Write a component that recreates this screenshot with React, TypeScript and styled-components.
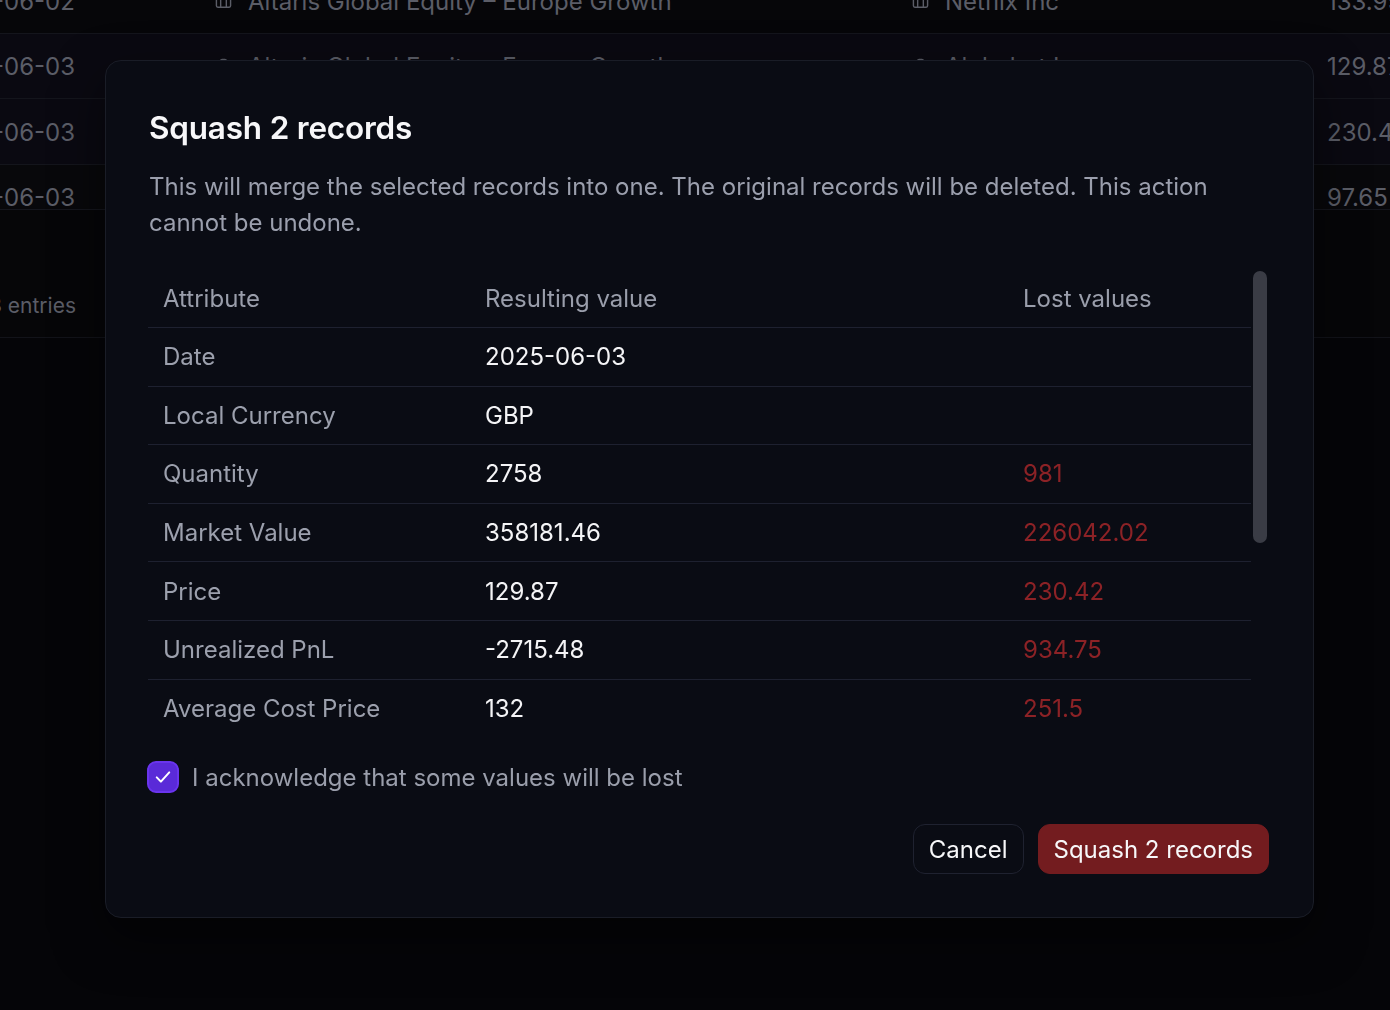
import React from 'react'
import styled, { createGlobalStyle } from 'styled-components'
import { Briefcase } from 'lucide-react'

const GlobalStyle = createGlobalStyle`
  * { box-sizing: border-box; }
  body {
    margin: 0;
    background: #050508;
    font-family: Inter, "Noto Sans", sans-serif;
    overflow: hidden;
  }
`

type Holding = { date: string; fund: string; company: string; price: string; selected?: boolean }

const holdings: Holding[] = [
    { date: '2025-06-02', fund: 'Altaris Global Equity – Europe Growth', company: 'Netflix Inc', price: '133.95' },
    { date: '2025-06-03', fund: 'Altaris Global Equity – Europe Growth', company: 'Alphabet Inc', price: '129.87', selected: true },
    { date: '2025-06-03', fund: 'Altaris Global Equity – Europe Growth', company: 'Alphabet Inc', price: '230.42', selected: true },
    { date: '2025-06-03', fund: 'Altaris Global Equity – Europe Growth', company: 'Alphabet Inc', price: '97.65' },
]

type Attr = { name: string; value: string; lost?: string }

const attributes: Attr[] = [
    { name: 'Date', value: '2025-06-03' },
    { name: 'Local Currency', value: 'GBP' },
    { name: 'Quantity', value: '2758', lost: '981' },
    { name: 'Market Value', value: '358181.46', lost: '226042.02' },
    { name: 'Price', value: '129.87', lost: '230.42' },
    { name: 'Unrealized PnL', value: '-2715.48', lost: '934.75' },
    { name: 'Average Cost Price', value: '132', lost: '251.5' },
    { name: 'Cost Value', value: '364052.00', lost: '246718.50' },
    { name: 'Company', value: 'Alphabet Inc' },
    { name: 'Fund', value: 'Altaris Global Equity – Europe Growth' },
    { name: 'ISIN', value: 'US02079K3059' },
    { name: 'Sector', value: 'Communication Services' },
]

// visible part of the scroll area vs. full content height
const VIEW_HEIGHT = 466
const TABLE_PADDING = 37
const CONTENT_HEIGHT = 58 + attributes.length * 58.6 + TABLE_PADDING

const App = () => {
    const thumb = Math.round((VIEW_HEIGHT * VIEW_HEIGHT) / CONTENT_HEIGHT)

    return (
        <Page>
            <GlobalStyle />
            <BgTable>
                <BgInner>
                    {holdings.map((h, i) => (
                        <BgRow key={i} selected={h.selected} last={i === holdings.length - 1}>
                            <BgCell>{h.date}</BgCell>
                            <BgCell><Briefcase size={17} strokeWidth={2} />{h.fund}</BgCell>
                            <BgCell><Briefcase size={17} strokeWidth={2} />{h.company}</BgCell>
                            <BgCell>{h.price}</BgCell>
                        </BgRow>
                    ))}
                </BgInner>
            </BgTable>
            <BgFooter>
                <FooterText>Showing 1 to 3 of 3 entries</FooterText>
            </BgFooter>

            <Dialog>
                <Title>Squash 2 records</Title>
                <Description>
                    This will merge the selected records into one. The original records will be deleted. This action cannot be undone.
                </Description>

                <TableArea>
                    <Table>
                        <HeadRow>
                            <HeadCell>Attribute</HeadCell>
                            <HeadCell>Resulting value</HeadCell>
                            <HeadCell>Lost values</HeadCell>
                        </HeadRow>
                        {attributes.map((a) => (
                            <BodyRow key={a.name}>
                                <AttrCell>{a.name}</AttrCell>
                                <ValueCell>{a.value}</ValueCell>
                                <LostCell>{a.lost ?? ''}</LostCell>
                            </BodyRow>
                        ))}
                    </Table>
                    <ScrollTrack>
                        <ScrollThumb style={{ height: thumb }} />
                    </ScrollTrack>
                </TableArea>

                <Acknowledge>
                    <CheckBox>
                        <svg width="20" height="20" viewBox="0 0 24 24" fill="none" stroke="#fff" strokeWidth="2.4" strokeLinecap="round" strokeLinejoin="round">
                            <polyline points="4.5 12.5 9.5 17.5 19.5 6.5" />
                        </svg>
                    </CheckBox>
                    <AckLabel>I acknowledge that some values will be lost</AckLabel>
                </Acknowledge>

                <Actions>
                    <Button>Cancel</Button>
                    <Button danger>Squash 2 records</Button>
                </Actions>
            </Dialog>
        </Page>
    )
}

export default App

const Page = styled.div`
width: 100vw;
height: 100vh;
background: #050508;
overflow: hidden;
`

const BgTable = styled.div`
height: 210px;
overflow: hidden;
border-bottom: 1px solid #15161d;
`

const BgInner = styled.div`
margin-top: -32px;
margin-left: -82px;
`

const BgRow = styled.div<{ selected?: boolean; last?: boolean }>`
display: grid;
grid-template-columns: 281px 697px 415px 220px;
height: 65.5px;
align-items: center;
background: ${({ selected, last }) => selected ? '#0a0911' : last ? '#08080b' : '#060609'};
border-bottom: 1px solid #14151c;
`

const BgCell = styled.div`
display: flex;
align-items: center;
gap: 16px;
padding-left: 16px;
padding-top: 2px;
font-size: 24px;
color: #5b5d67;
white-space: nowrap;
overflow: hidden;

svg {
  flex-shrink: 0;
  color: #5b5d67;
}
`

const BgFooter = styled.div`
height: 128px;
display: flex;
align-items: flex-end;
padding-bottom: 19px;
border-bottom: 1px solid #121319;
background: #060608;
`

const FooterText = styled.div`
width: 76px;
display: flex;
justify-content: flex-end;
white-space: nowrap;
font-size: 21px;
color: #5b5d67;
`

const Dialog = styled.div`
position: fixed;
left: 105px;
top: 60px;
width: 1209px;
display: flex;
flex-direction: column;
padding: 49px 44px 43px 43px;
background: #0a0c14;
border: 1px solid #1a1d27;
border-radius: 16px;
box-shadow: 0 20px 50px rgba(0, 0, 0, 0.5);
`

const Title = styled.h2`
margin: 0;
font-size: 31.5px;
line-height: 36px;
font-weight: 600;
color: #f7f7f9;
letter-spacing: -0.2px;
`

const Description = styled.p`
margin: 23px 0 0;
font-size: 24px;
line-height: 36px;
color: #9b9fad;
`

const TableArea = styled.div`
margin-top: 29px;
height: ${VIEW_HEIGHT}px;
display: flex;
`

const Table = styled.div`
flex: 1;
overflow: hidden;
margin-left: -1px;
`

const ScrollTrack = styled.div`
width: 18px;
flex-shrink: 0;
padding: 1px 2px 0;
`

const ScrollThumb = styled.div`
width: 14px;
border-radius: 7px;
background: #3a3c45;
`

const HeadRow = styled.div`
display: grid;
grid-template-columns: 322px 538px 1fr;
height: 58px;
align-items: center;
border-bottom: 1px solid #1e2130;
`

const BodyRow = styled(HeadRow)`
height: 58.6px;
`

const HeadCell = styled.div`
padding: 0 15px;
font-size: 24px;
color: #9a9eab;
white-space: nowrap;
`

const AttrCell = styled(HeadCell)`
color: #9ca0ad;
`

const ValueCell = styled(HeadCell)`
color: #f4f4f6;
`

const LostCell = styled(HeadCell)`
color: #8c2226;
`

const Acknowledge = styled.label`
margin-top: 25px;
display: flex;
align-items: center;
gap: 13px;
margin-left: -2px;
`

const CheckBox = styled.span`
width: 32px;
height: 32px;
border-radius: 9px;
background: #5a2ad8;
border: 2px solid #6a34ee;
display: flex;
align-items: center;
justify-content: center;
`

const AckLabel = styled.span`
font-size: 24px;
color: #9a9eab;
`

const Actions = styled.div`
margin-top: 31px;
display: flex;
justify-content: flex-end;
gap: 14px;
`

const Button = styled.button<{ danger?: boolean }>`
height: 50px;
padding: 0 15px;
border-radius: 12px;
font-family: Inter, "Noto Sans", sans-serif;
font-size: 24px;
color: #f7f7f9;
cursor: pointer;
background: ${({ danger }) => danger ? '#731c1f' : '#0a0c14'};
border: 1px solid ${({ danger }) => danger ? '#731c1f' : '#1f2230'};
`
